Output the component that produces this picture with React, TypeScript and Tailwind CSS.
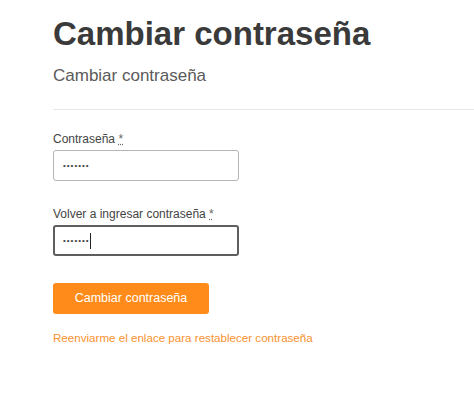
import React from "react";

export default function App() {
  return (
    <div className="w-[474px] h-[402px] bg-white overflow-hidden" style={{ fontFamily: '"Liberation Sans", Arial, sans-serif' }}>
      <div className="pl-[53px] pt-[14px]">
        <h1 className="text-[33px] leading-[40px] font-bold text-[#3a3a3a]">Cambiar contraseña</h1>
        <h2 className="mt-[12px] text-[17px] leading-[20px] text-[#5a5a5a]">Cambiar contraseña</h2>
        <div className="mt-[23px] h-px bg-[#e6e6e6] w-[421px]" />
        <div className="mt-[22px] text-[12px] leading-[14px] text-[#444]">
          Contraseña <span className="underline decoration-dotted text-[#666]">*</span>
        </div>
        <div className="mt-[4px] w-[186px] h-[31px] rounded-[3px] border border-[#b5b5b5] flex items-center pl-[9px] text-[8px] tracking-[1px] text-[#444]">
          •••••••
        </div>
        <div className="mt-[26px] text-[12px] leading-[14px] text-[#444]">
          Volver a ingresar contraseña <span className="underline decoration-dotted text-[#666]">*</span>
        </div>
        <div className="mt-[4px] w-[186px] h-[31px] rounded-[3px] border-2 border-[#5e5e5e] flex items-center pl-[8px] text-[8px] tracking-[1px] text-[#444]">
          •••••••<span className="inline-block w-px h-[16px] bg-[#222]" />
        </div>
        <button className="mt-[27px] w-[156px] h-[31px] rounded-[3px] bg-[#ff8c1a] text-white text-[12.5px] flex items-center justify-center">
          Cambiar contraseña
        </button>
        <div className="mt-[17px] text-[11.6px] leading-[14px] text-[#f7922e]">
          Reenviarme el enlace para restablecer contraseña
        </div>
      </div>
    </div>
  );
}
